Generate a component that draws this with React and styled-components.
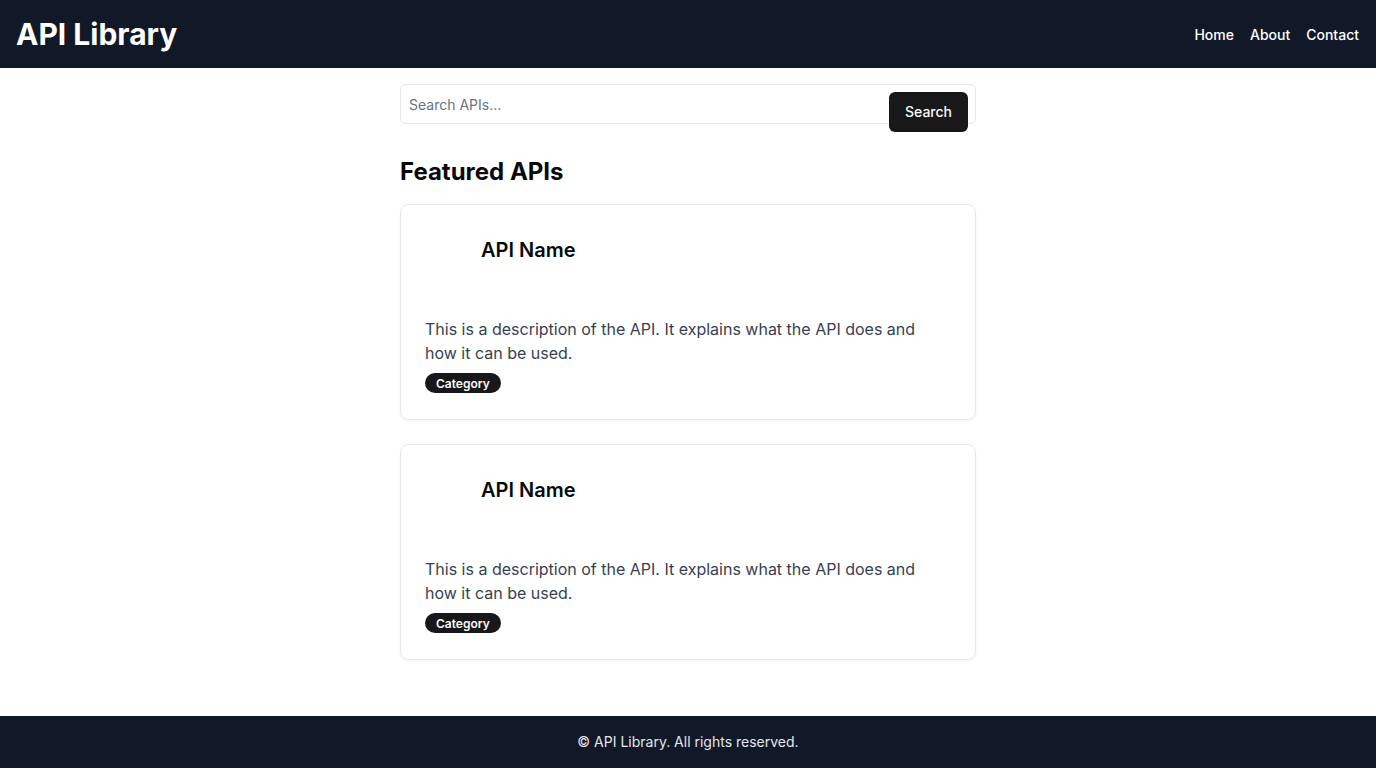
import React from 'react'
import styled, { createGlobalStyle } from 'styled-components'

const GlobalStyle = createGlobalStyle`
* { box-sizing: border-box; }
body {
  margin: 0;
  font-family: Inter, "Noto Sans", "Liberation Sans", sans-serif;
  background: #fff;
  color: #09090b;
}
`

const Page = styled.div`
min-height: 100vh;
display: flex;
flex-direction: column;
`
const Header = styled.header`
height: 68px;
background: #111827;
color: #fff;
display: flex;
align-items: center;
justify-content: space-between;
padding: 0 17px 0 16px;
`
const Logo = styled.h1`
margin: 0;
font-size: 30px;
font-weight: 700;
line-height: 36px;
`
const Nav = styled.nav`
display: flex;
gap: 16px;
`
const NavLink = styled.a`
color: #fff;
font-size: 14px;
font-weight: 500;
text-decoration: none;
cursor: pointer;
`
const Main = styled.main`
flex: 1;
width: 576px;
margin: 0 auto;
padding: 16px 0 32px;
`
const SearchForm = styled.form`
position: relative;
height: 40px;
`
const SearchInput = styled.input`
width: 100%;
height: 40px;
border: 1px solid #e5e7eb;
border-radius: 6px;
padding: 0 8px;
font-family: inherit;
font-size: 14px;
color: #09090b;
outline: none;
&::placeholder { color: #6b7280; }
`
const SearchButton = styled.button`
position: absolute;
top: 8px;
right: 8px;
height: 40px;
padding: 0 16px 1px;
border: none;
border-radius: 6px;
background: #18181b;
color: #fafafa;
font-family: inherit;
font-size: 14px;
font-weight: 500;
cursor: pointer;
`
const SectionTitle = styled.h2`
margin: 32px 0 16px;
font-size: 24px;
font-weight: 700;
line-height: 32px;
`
const CardList = styled.div`
display: flex;
flex-direction: column;
gap: 24px;
`
const Card = styled.div`
border: 1px solid #e5e7eb;
border-radius: 8px;
box-shadow: 0 1px 2px rgba(0, 0, 0, 0.05);
padding: 25px 24px 26px;
`
const CardHeader = styled.div`
display: flex;
align-items: center;
gap: 16px;
height: 40px;
`
const Thumb = styled.div`
width: 40px;
height: 40px;
`
const CardTitle = styled.h3`
margin: 0;
font-size: 20px;
font-weight: 600;
line-height: 28px;
`
const Description = styled.p`
margin: 47px 0 0;
font-size: 16px;
line-height: 24px;
color: #374151;
`
const Badge = styled.span`
display: inline-flex;
align-items: center;
height: 20px;
margin-top: 8px;
padding: 0 11px;
border-radius: 999px;
background: #18181b;
color: #fafafa;
font-size: 12px;
font-weight: 600;
`
const Footer = styled.footer`
height: 52px;
background: #111827;
color: #e5e7eb;
display: flex;
align-items: center;
justify-content: center;
padding-bottom: 1px;
font-size: 14px;
`

const apis = [1, 2]

function ApiCard() {
  return (
    <Card>
      <CardHeader>
        <Thumb />
        <CardTitle>API Name</CardTitle>
      </CardHeader>
      <Description>
        This is a description of the API. It explains what the API does and how it can be used.
      </Description>
      <Badge>Category</Badge>
    </Card>
  )
}

export default function App() {
  return (
    <Page>
      <GlobalStyle />
      <Header>
        <Logo>API Library</Logo>
        <Nav>
          <NavLink>Home</NavLink>
          <NavLink>About</NavLink>
          <NavLink>Contact</NavLink>
        </Nav>
      </Header>
      <Main>
        <SearchForm onSubmit={(e) => e.preventDefault()}>
          <SearchInput placeholder="Search APIs..." />
          <SearchButton type="submit">Search</SearchButton>
        </SearchForm>
        <SectionTitle>Featured APIs</SectionTitle>
        <CardList>
          {apis.map((id) => <ApiCard key={id} />)}
        </CardList>
      </Main>
      <Footer>© API Library. All rights reserved.</Footer>
    </Page>
  )
}
